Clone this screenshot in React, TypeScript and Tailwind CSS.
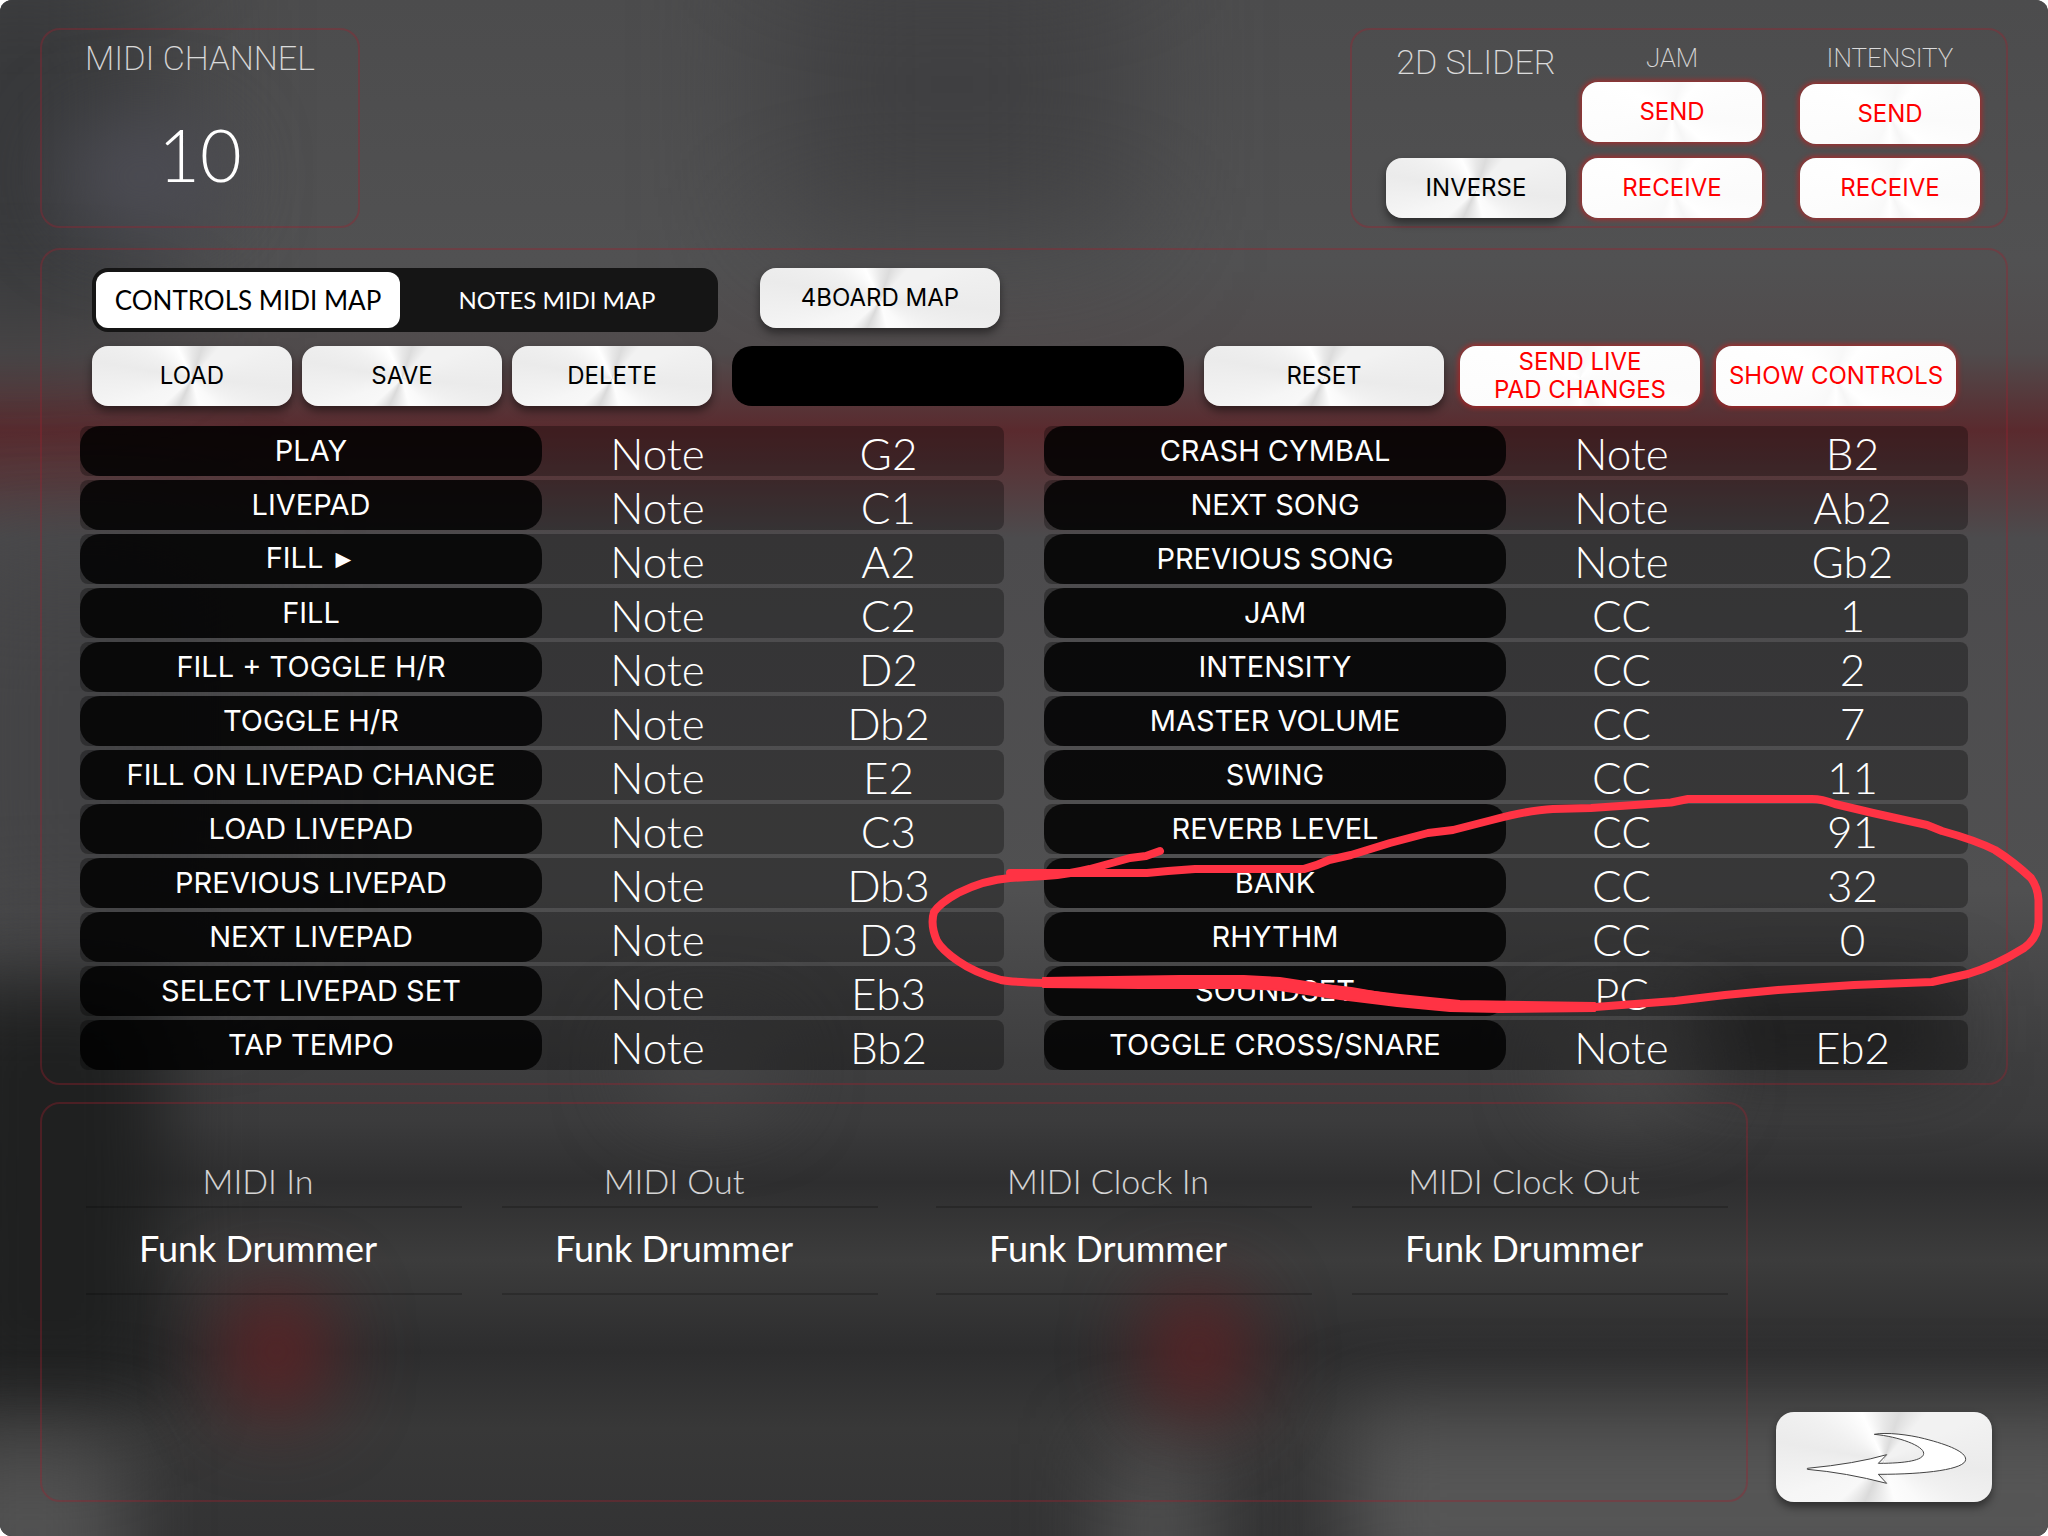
import { useState, type ReactNode } from 'react';
import clsx from 'clsx';

type Mapping = { name: string; type: string; value: string; arrow?: boolean };

const leftMap: Mapping[] = [
  { name: 'PLAY', type: 'Note', value: 'G2' },
  { name: 'LIVEPAD', type: 'Note', value: 'C1' },
  { name: 'FILL', type: 'Note', value: 'A2', arrow: true },
  { name: 'FILL', type: 'Note', value: 'C2' },
  { name: 'FILL + TOGGLE H/R', type: 'Note', value: 'D2' },
  { name: 'TOGGLE H/R', type: 'Note', value: 'Db2' },
  { name: 'FILL ON LIVEPAD CHANGE', type: 'Note', value: 'E2' },
  { name: 'LOAD LIVEPAD', type: 'Note', value: 'C3' },
  { name: 'PREVIOUS LIVEPAD', type: 'Note', value: 'Db3' },
  { name: 'NEXT LIVEPAD', type: 'Note', value: 'D3' },
  { name: 'SELECT LIVEPAD SET', type: 'Note', value: 'Eb3' },
  { name: 'TAP TEMPO', type: 'Note', value: 'Bb2' },
];

const rightMap: Mapping[] = [
  { name: 'CRASH CYMBAL', type: 'Note', value: 'B2' },
  { name: 'NEXT SONG', type: 'Note', value: 'Ab2' },
  { name: 'PREVIOUS SONG', type: 'Note', value: 'Gb2' },
  { name: 'JAM', type: 'CC', value: '1' },
  { name: 'INTENSITY', type: 'CC', value: '2' },
  { name: 'MASTER VOLUME', type: 'CC', value: '7' },
  { name: 'SWING', type: 'CC', value: '11' },
  { name: 'REVERB LEVEL', type: 'CC', value: '91' },
  { name: 'BANK', type: 'CC', value: '32' },
  { name: 'RHYTHM', type: 'CC', value: '0' },
  { name: 'SOUNDSET', type: 'PC', value: '' },
  { name: 'TOGGLE CROSS/SNARE', type: 'Note', value: 'Eb2' },
];

const panel = 'rounded-[20px] border-2 border-[#a0202e]/35';
const thin = "font-['Roboto',sans-serif] font-extralight text-white/80";

export default function App() {
  const [tab, setTab] = useState('controls');

  return (
    <main className="relative flex min-h-screen flex-col overflow-hidden rounded-xl bg-[#4a4a4b] px-10 pt-7 pb-[34px]">
      <Backdrop />

      {/* Channel + 2D slider */}
      <div className="relative flex justify-between">
        <section className={clsx(panel, 'flex w-80 flex-col items-center')}>
          <h2 className={clsx(thin, 'mt-1 text-[34px] leading-[48px]')}>MIDI CHANNEL</h2>
          <p className="mt-8 font-['Lato',sans-serif] text-[72px] leading-[80px] font-light text-white">
            10
          </p>
        </section>

        <section className={clsx(panel, 'flex h-[200px] pr-[26px] pb-2 pl-[34px]')}>
          <div className="flex flex-col items-center justify-between">
            <h2 className={clsx(thin, 'mt-2 text-[34px] leading-[48px]')}>2D SLIDER</h2>
            <MetalButton className="w-[180px]">INVERSE</MetalButton>
          </div>
          <div className="ml-4 flex flex-col items-center justify-end gap-4">
            <h3 className={clsx(thin, '-mb-3 text-[26px] leading-10')}>JAM</h3>
            <MetalButton active className="w-[180px]">SEND</MetalButton>
            <MetalButton active className="w-[180px]">RECEIVE</MetalButton>
          </div>
          <div className="ml-[38px] flex flex-col items-center justify-end gap-[14px]">
            <h3 className={clsx(thin, '-mb-2 text-[26px] leading-10')}>INTENSITY</h3>
            <MetalButton active className="w-[180px]">SEND</MetalButton>
            <MetalButton active className="w-[180px]">RECEIVE</MetalButton>
          </div>
        </section>
      </div>

      {/* Mapping */}
      <section className={clsx(panel, 'relative mt-5 px-[38px] pt-[18px] pb-[9px]')}>
        <div className="flex items-start px-3">
          <div
            className="grid h-16 w-[626px] grid-cols-[304px_1fr] rounded-2xl bg-[#151515] p-1"
            role="tablist"
          >
            <Tab on={tab === 'controls'} onClick={() => setTab('controls')}>
              CONTROLS MIDI MAP
            </Tab>
            <Tab on={tab === 'notes'} onClick={() => setTab('notes')}>
              NOTES MIDI MAP
            </Tab>
          </div>
          <MetalButton className="ml-[42px] w-60">4BOARD MAP</MetalButton>
        </div>

        <div className="mt-[14px] flex px-3">
          <MetalButton className="w-[200px]">LOAD</MetalButton>
          <MetalButton className="ml-[10px] w-[200px]">SAVE</MetalButton>
          <MetalButton className="ml-[10px] w-[200px]">DELETE</MetalButton>
          <input
            aria-label="Map name"
            className="mx-5 h-[60px] min-w-0 flex-1 rounded-[20px] bg-black px-5 text-2xl text-white outline-none"
          />
          <MetalButton className="w-60">RESET</MetalButton>
          <MetalButton active className="ml-4 w-60">
            SEND LIVE
            <br />
            PAD CHANGES
          </MetalButton>
          <MetalButton active className="ml-4 w-60">SHOW CONTROLS</MetalButton>
        </div>

        <div className="mt-4 flex gap-10">
          <MapTable rows={leftMap} label="Transport mappings" />
          <MapTable rows={rightMap} label="Mixer mappings" />
        </div>
      </section>

      {/* Ports */}
      <div className="relative mt-[17px] flex flex-1 items-end justify-between">
        <section className={clsx(panel, 'flex h-[400px] w-[1708px] justify-between px-11 pt-14')}>
          <div className="flex gap-10">
            <Port title="MIDI In" device="Funk Drummer" />
            <Port title="MIDI Out" device="Funk Drummer" />
          </div>
          <div className="-mr-[26px] flex gap-10">
            <Port title="MIDI Clock In" device="Funk Drummer" />
            <Port title="MIDI Clock Out" device="Funk Drummer" />
          </div>
        </section>
        <BackButton />
      </div>

      <Scribble />
    </main>
  );
}

const metal =
  'bg-[conic-gradient(from_0deg_at_50%_54%,#e8e8e8,#dcdcdc_18deg,#f2f2f2_42deg,#f2f2f2_65deg,#ebebeb_95deg,#f1f1f1_115deg,#fafafa_140deg,#fdfdfd_165deg,#f0f0f0_180deg,#dadada_205deg,#f8f8f8_228deg,#f6f6f6_250deg,#ebebeb_280deg,#f1f1f1_300deg,#ffffff_335deg,#e8e8e8)] shadow-[0_5px_8px_rgba(0,0,0,0.45)]';
const metalLit =
  'bg-[conic-gradient(from_0deg_at_50%_54%,#fafafa,#f8f8f8_14deg,#ffffff_40deg,#fbfbfb_95deg,#ffffff_130deg,#f6f6f6_155deg,#ffffff_180deg,#f9f9f9_205deg,#ffffff_300deg,#fafafa)] shadow-[0_0_5px_2px_rgba(215,25,25,0.6)]';

function MetalButton({
  children,
  className,
  active,
}: {
  children: ReactNode;
  className: string;
  active?: boolean;
}) {
  return (
    <button
      type="button"
      className={clsx(
        "h-[60px] shrink-0 rounded-2xl text-center font-['Inter',sans-serif] text-2xl leading-7",
        active ? metalLit : metal,
        active ? 'text-[#ff0000]' : 'text-black',
        className
      )}
    >
      {children}
    </button>
  );
}

function Tab({ children, on, onClick }: { children: ReactNode; on: boolean; onClick: () => void }) {
  return (
    <button
      type="button"
      role="tab"
      aria-selected={on}
      onClick={onClick}
      className={clsx(
        "rounded-xl font-['Lato',sans-serif] whitespace-nowrap",
        on ? 'bg-white text-[26px] text-black' : 'text-[24px] text-white'
      )}
    >
      {children}
    </button>
  );
}

function MapTable({ rows, label }: { rows: Mapping[]; label: string }) {
  return (
    <table
      aria-label={label}
      className="flex-1 table-fixed border-separate border-spacing-x-0 border-spacing-y-1"
    >
      <tbody>
        {rows.map((r, i) => (
          <tr key={i} className="h-[50px]">
            <th scope="row" className="w-1/2 rounded-l-lg bg-black/30 p-0">
              <button
                type="button"
                className="block h-[50px] w-full rounded-[20px] bg-black/80 pb-px font-['Inter',sans-serif] text-[29px] leading-8 font-normal text-white"
              >
                {r.name}
                {r.arrow && (
                  <span className="font-['Liberation_Sans',sans-serif] text-[26px]"> ►</span>
                )}
              </button>
            </th>
            <td className="w-1/4 bg-black/30 p-0">
              <Value>{r.type}</Value>
            </td>
            <td className="w-1/4 rounded-r-lg bg-black/30 p-0">
              <Value>{r.value}</Value>
            </td>
          </tr>
        ))}
      </tbody>
    </table>
  );
}

function Value({ children }: { children: ReactNode }) {
  return (
    <div className="h-[50px] text-center font-['Lato',sans-serif] text-[44px] leading-[54px] font-light text-white">
      {children}
    </div>
  );
}

function Port({ title, device }: { title: string; device: string }) {
  return (
    <div className="w-[376px] text-center font-['Lato',sans-serif]">
      <h3 className="h-12 border-b-2 border-black/20 pr-8 text-[34px] leading-[42px] font-light text-white/80">
        {title}
      </h3>
      <p className="h-[87px] border-b-2 border-black/20 pr-8 text-[36px] leading-[80px] text-white">
        {device}
      </p>
    </div>
  );
}

function BackButton() {
  return (
    <button
      type="button"
      aria-label="Back"
      className={clsx(metal, 'mr-4 h-[90px] w-[216px] rounded-[18px]')}
    >
      <svg viewBox="0 0 648 270" className="h-full w-full" fill="#fff" stroke="#444" strokeWidth="3">
        <path d="M295 67 C330 60 400 68 445 80 C520 99 569 120 569 142 C569 172 450 187 307 187 L332 214 Q210 182 94 172 L94 169 Q240 155 332 128 L307 154 C390 154 443 145 443 124 C443 102 370 74 295 67 Z" />
      </svg>
    </button>
  );
}

/* soft out-of-focus shapes behind the panels */
function Backdrop() {
  return (
    <div aria-hidden="true" className="absolute inset-0 bg-[linear-gradient(180deg,#4c4c4d_0%,#515152_17%,#504b4c_23%,#5a2a2e_28%,#56383b_31%,#4c4b4d_35%,#505051_58%,#464647_64%,#3e3e3f_69%,#3b3b3c_73%,#2e2e2f_77%,#3c3c3c_82%,#2d2d2e_88%,#383838_93%,#333334_100%)]">
      <div className="absolute top-[-4%] left-[-6%] h-[26%] w-[14%] bg-[#38393b] blur-3xl" />
      <div className="absolute top-[8%] left-[3%] h-[7%] w-[8%] rounded-full bg-[#4d4d55] blur-2xl" />
      <div className="absolute top-[-4%] left-[38%] h-[19%] w-[17%] bg-[#404042] blur-3xl" />
      <div className="absolute top-[36%] left-[-3%] h-[26%] w-[14%] bg-[#434345] blur-3xl" />
      <div className="absolute top-[64%] left-[-3%] h-[27%] w-[11%] bg-[#1f2020] blur-2xl" />
      <div className="absolute top-[65%] left-[83%] h-[4%] w-[12%] bg-[#242424] blur-2xl" />
      <div className="absolute top-[67%] left-[31%] h-[5%] w-[7%] rounded-full bg-[#474748] blur-2xl" />
      <div className="absolute top-[67%] left-[76%] h-[5%] w-[7%] rounded-full bg-[#4b4b4b] blur-2xl" />
      <div className="absolute top-[94%] left-[-3%] h-[12%] w-[9%] bg-[#525252] blur-2xl" />
      <div className="absolute top-[94%] left-[54%] h-[12%] w-[5%] bg-[#505050] blur-2xl" />
      <div className="absolute top-[92%] left-[66%] h-[12%] w-[38%] bg-[#565656] blur-2xl" />
      <div className="absolute top-[84%] left-[11%] h-[8%] w-[5%] rounded-full bg-[#5f2225] blur-2xl" />
      <div className="absolute top-[84%] left-[56%] h-[8%] w-[5%] rounded-full bg-[#5c2225] blur-2xl" />
    </div>
  );
}

/* hand-drawn marker loop round the bank and rhythm rows */
function Scribble() {
  return (
    <svg
      aria-hidden="true"
      viewBox="0 0 2048 1536"
      preserveAspectRatio="none"
      className="pointer-events-none absolute inset-0 h-full w-full"
      stroke="#ff3344"
      strokeWidth="8"
      strokeLinecap="round"
      strokeLinejoin="round"
      fill="none"
    >
      <path d="M1010 873 L1147 873 L1168 871 L1195 869 L1304 869 Q1316 866 1329 860 L1351 855 L1390 843 L1428 833 L1453 830 L1492 820 Q1530 810 1553 809 L1591 808 L1671 802.5 L1688 799 L1812 799 Q1822 799 1835 804 L1873 813 L1927 825 L1942 831 Q1975 840 1995 850 Q2014 862 2031 878 Q2038 888 2038.500 900 L2038.500 922 Q2038 938 2024 948 Q1995 966 1968 974 L1932 982 L1854 985 L1778 990 L1725 995 L1675 1001 L1595 1007 L1503 1007 Q1450 1006 1397 999 L1351 991 L1280 983 Q1240 981 1110 982 L1044 983 Q1010 982 1001 980 Q975 973 958 961 Q942 950 937 941 Q930 925 934 912 Q940 903 958 893 Q984 880 1010 878 L1045 876 Q1070 874 1090 869 L1130 858 L1146 856 L1160 851" />
      <path
        fill="#ff3344"
        strokeWidth="2"
        d="M1043 978 L1180 976 L1244 976 L1280 978 L1358 990 L1400 995 L1460 1001 L1595 1003 L1595 1011 L1500 1012 L1450 1011 L1397 1006 L1340 999 L1280 990 L1240 988 L1140 988 L1043 987 Z"
      />
    </svg>
  );
}
